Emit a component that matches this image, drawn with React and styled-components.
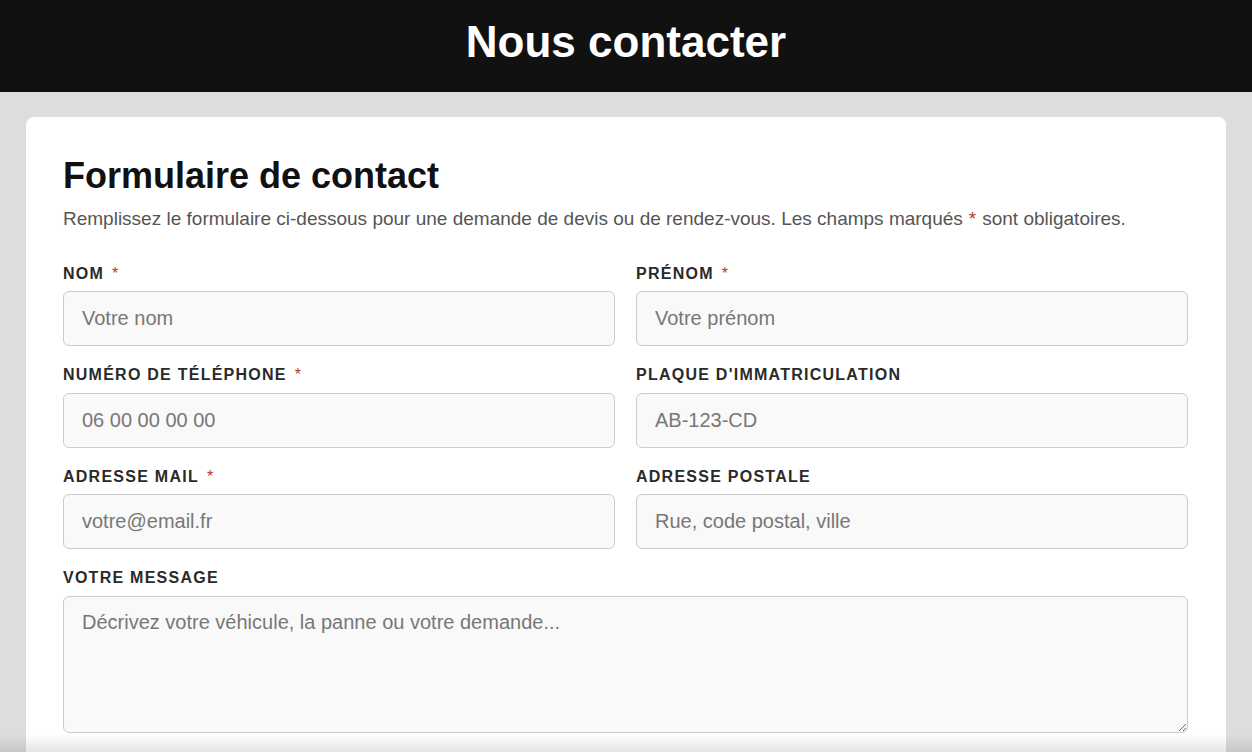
import React from "react";
import styled, { createGlobalStyle } from "styled-components";

const GlobalStyle = createGlobalStyle`
  * { box-sizing: border-box; }
  body {
    margin: 0;
    background: #dddddd;
    font-family: "Liberation Sans", Arial, sans-serif;
    color: #222;
  }
`;

const Header = styled.header`
  background: #111111;
  height: 92px;
  display: flex;
  align-items: center;
  justify-content: center;
`;

const SiteTitle = styled.h1`
  margin: 0;
  color: #ffffff;
  font-size: 44px;
  font-weight: 700;
  line-height: 1;
  padding-bottom: 8px;
`;

const Main = styled.main`
  padding: 25px 26px 40px;
`;

const Card = styled.section`
  max-width: 1200px;
  margin: 0 auto;
  background: #ffffff;
  border-radius: 8px;
  padding: 37px 38px 40px 37px;
`;

const Heading = styled.h2`
  margin: 0 0 8px;
  font-size: 36px;
  line-height: 1.2;
  font-weight: 700;
  color: #111111;
`;

const Intro = styled.p`
  margin: 0 0 31px;
  font-size: 19px;
  line-height: 1.45;
  color: #555555;
`;

const Star = styled.span`
  color: #b23b30;
  font-weight: 400;
  margin: 0 ${(p) => (p.$inline ? "6px" : "0")} 0 ${(p) => (p.$inline ? "6px" : "8px")};
`;

const Grid = styled.form`
  display: grid;
  grid-template-columns: 1fr 1fr;
  column-gap: 21px;
  row-gap: 19.4px;
`;

const Field = styled.div`
  display: flex;
  flex-direction: column;
  grid-column: ${(p) => (p.$wide ? "1 / -1" : "auto")};
`;

const Label = styled.label`
  font-size: 16px;
  line-height: 1.2;
  font-weight: 700;
  text-transform: uppercase;
  letter-spacing: 1.25px;
  color: #2a2a2a;
  margin-bottom: 8px;
`;

const Input = styled.input`
  height: 55px;
  padding: 0 18px;
  border: 1px solid #cccccc;
  border-radius: 6px;
  background: #f9f9f9;
  font-family: inherit;
  font-size: 20px;
  color: #222;
  outline: none;
  &::placeholder { color: #777777; }
`;

const TextArea = styled.textarea`
  height: 137px;
  padding: 13px 18px;
  border: 1px solid #cccccc;
  border-radius: 6px;
  background: #f9f9f9;
  font-family: inherit;
  font-size: 20px;
  line-height: 1.2;
  color: #222;
  outline: none;
  resize: vertical;
  &::placeholder { color: #777777; }
`;

const BottomFade = styled.div`
  position: fixed;
  left: 0;
  right: 0;
  bottom: 0;
  height: 18px;
  pointer-events: none;
  background: linear-gradient(to bottom, rgba(0, 0, 0, 0), rgba(0, 0, 0, 0.1));
`;

const fields = [
  { id: "nom", label: "Nom", placeholder: "Votre nom", required: true },
  { id: "prenom", label: "Prénom", placeholder: "Votre prénom", required: true },
  { id: "tel", label: "Numéro de téléphone", placeholder: "06 00 00 00 00", required: true },
  { id: "plaque", label: "Plaque d'immatriculation", placeholder: "AB-123-CD" },
  { id: "mail", label: "Adresse mail", placeholder: "votre@email.fr", required: true },
  { id: "adresse", label: "Adresse postale", placeholder: "Rue, code postal, ville" },
];

export default function App() {
  return (
    <>
      <GlobalStyle />
      <Header>
        <SiteTitle>Nous contacter</SiteTitle>
      </Header>
      <Main>
        <Card>
          <Heading>Formulaire de contact</Heading>
          <Intro>
            Remplissez le formulaire ci-dessous pour une demande de devis ou de rendez-vous. Les champs marqués
            <Star $inline>*</Star>sont obligatoires.
          </Intro>
          <Grid onSubmit={(e) => e.preventDefault()}>
            {fields.map((f) => (
              <Field key={f.id}>
                <Label htmlFor={f.id}>
                  {f.label}
                  {f.required && <Star>*</Star>}
                </Label>
                <Input id={f.id} placeholder={f.placeholder} />
              </Field>
            ))}
            <Field $wide>
              <Label htmlFor="message">Votre message</Label>
              <TextArea id="message" placeholder="Décrivez votre véhicule, la panne ou votre demande..." />
            </Field>
          </Grid>
        </Card>
      </Main>
      <BottomFade />
    </>
  );
}
